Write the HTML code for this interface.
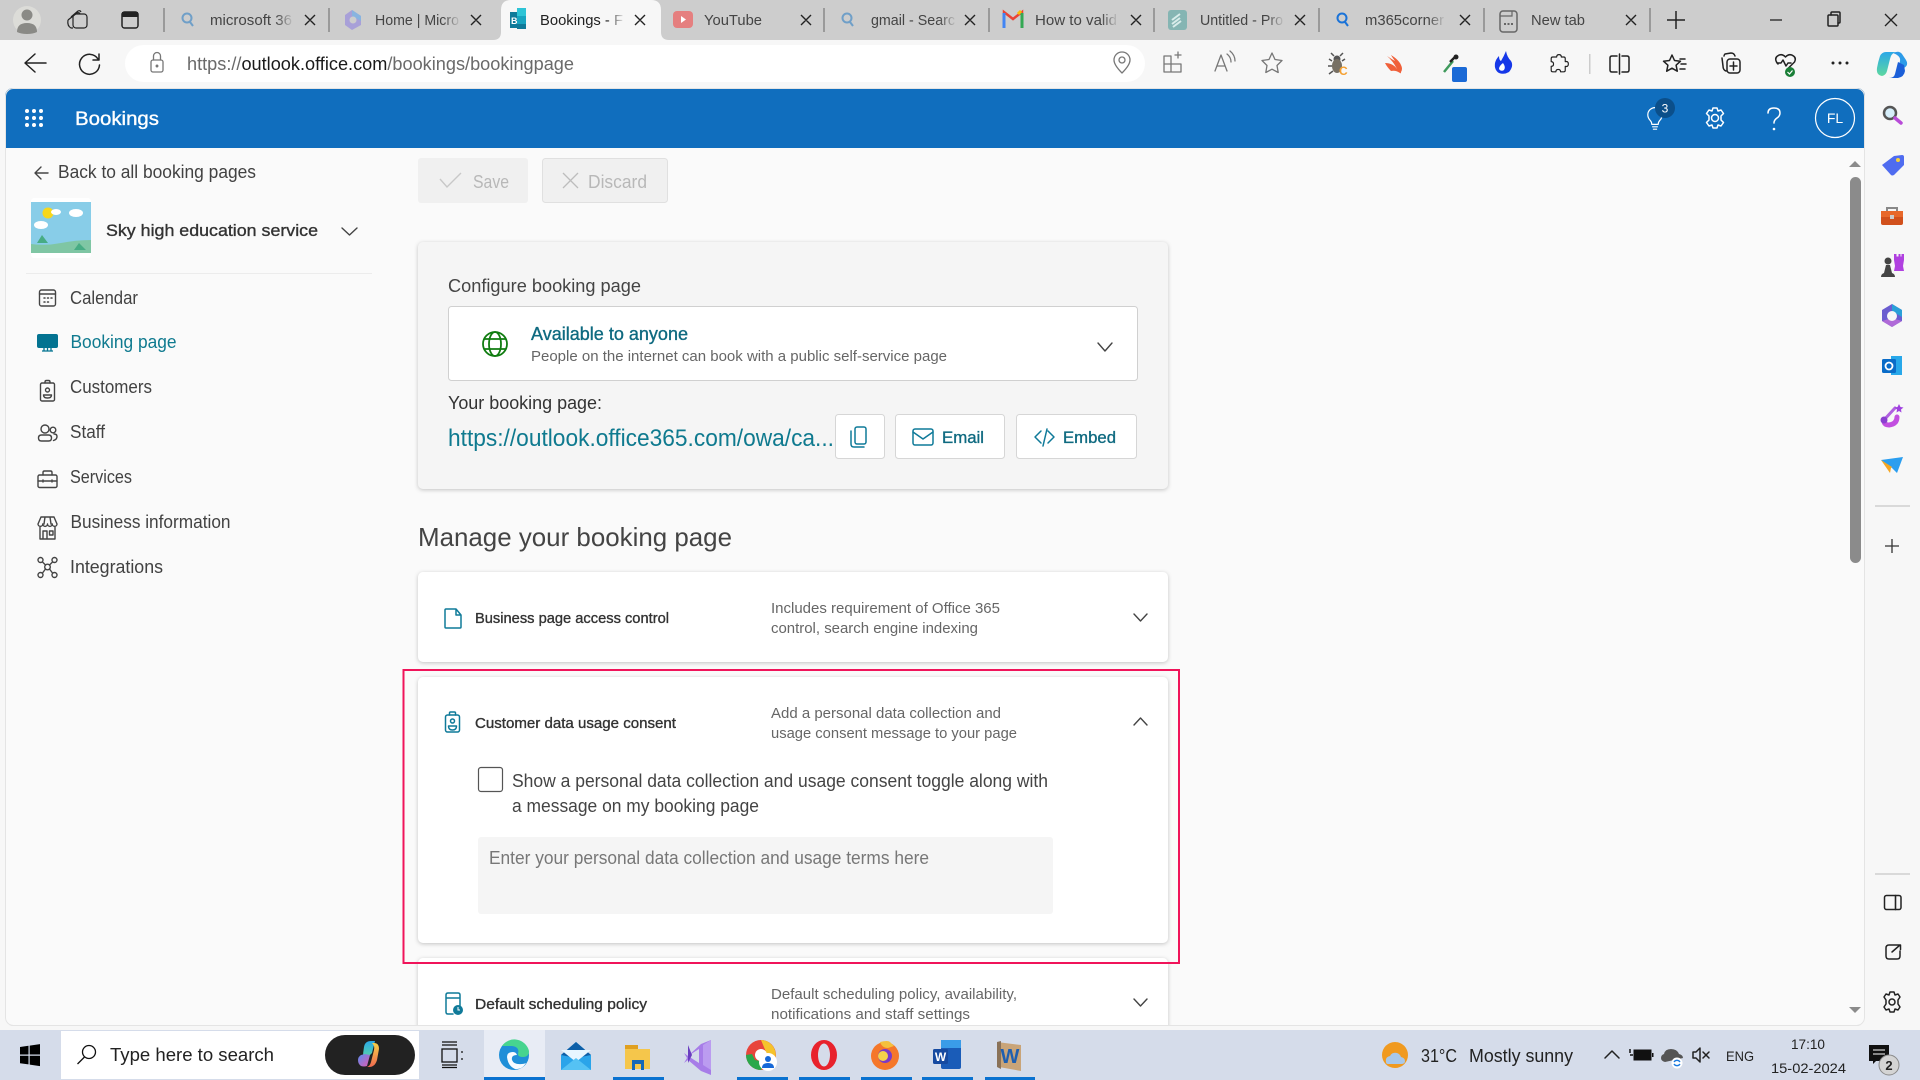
<!DOCTYPE html>
<html><head><meta charset="utf-8"><title>Bookings</title>
<style>
html,body{margin:0;padding:0;width:1920px;height:1080px;overflow:hidden;background:#f7f7f7}
svg{display:block;filter:blur(.35px)}
text{font-family:"Liberation Sans",sans-serif}
.tab{font-size:15px;fill:#444}
.x{stroke:#222;stroke-width:1.4;fill:none}
.s{fill:none;stroke:#444;stroke-width:1.4;stroke-linecap:round;stroke-linejoin:round}
.g{fill:none;stroke:#777;stroke-width:1.3;stroke-linecap:round;stroke-linejoin:round}
.d{fill:none;stroke:#222;stroke-width:1.5;stroke-linecap:round;stroke-linejoin:round}
.w{fill:none;stroke:#fff;stroke-width:1.5;stroke-linecap:round;stroke-linejoin:round}
.t{fill:none;stroke:#0f7a99;stroke-width:1.5;stroke-linecap:round;stroke-linejoin:round}
.nav{font-size:18px;fill:#424242}
.sb{fill:currentColor;stroke:currentColor;stroke-width:.35}
.ttl{font-size:15px;color:#333}
.desc{font-size:15px;fill:#666}
.card{filter:drop-shadow(0 1px 2px rgba(0,0,0,.22))}
</style></head><body>
<svg width="1920" height="1080" viewBox="0 0 1920 1080" xmlns="http://www.w3.org/2000/svg">
<defs><clipPath id="app"><rect x="5" y="88" width="1860" height="938" rx="8"/></clipPath>
<linearGradient id="fg"><stop offset="0" stop-color="#cdcdcd" stop-opacity="0"/><stop offset="1" stop-color="#cdcdcd"/></linearGradient>
<linearGradient id="fa"><stop offset="0" stop-color="#f7f7f7" stop-opacity="0"/><stop offset="1" stop-color="#f7f7f7"/></linearGradient>
<linearGradient id="cp1" x1="0" y1="0" x2="0" y2="1"><stop offset="0" stop-color="#2aa8e8"/><stop offset="1" stop-color="#5ed8a0"/></linearGradient>
<linearGradient id="cp2" x1="0" y1="0" x2="0" y2="1"><stop offset="0" stop-color="#f7d048"/><stop offset="1" stop-color="#f06a50"/></linearGradient>
<linearGradient id="cp3" x1="0" y1="0" x2="1" y2="1"><stop offset="0" stop-color="#5a8cf0"/><stop offset="1" stop-color="#e05ab0"/></linearGradient>
</defs>
<rect width="1920" height="1080" fill="#f7f7f7"/>
<!-- tab strip -->
<rect width="1920" height="40" fill="#cdcdcd"/>
<path d="M493 40q8 0 8-8V10q0-10 10-10h140q10 0 10 10v22q0 8 8 8z" fill="#f7f7f7"/>
<g stroke="#666" stroke-width="1"><path d="M164 8v24M329 8v24M824 8v24M989 8v24M1154 8v24M1319 8v24M1484 8v24M1650 8v24"/></g>
<!-- profile -->
<circle cx="27" cy="20" r="14" fill="#dcdcd8"/><circle cx="27" cy="15" r="5.5" fill="#8a8a86"/><path d="M17 32q0-9 10-9t10 9q-4 2-10 2t-10-2z" fill="#8a8a86"/>
<g fill="none" stroke="#222" stroke-width="1.2" stroke-linejoin="round"><path d="M71 17l7-6q2-1 3 1M68 20l9-7q2-1 3 1"/><rect x="73" y="14" width="14" height="14" rx="3"/><path d="M68 20q-1 6 3 8h2"/></g>
<rect x="122" y="12" width="16" height="16" rx="2.5" class="d"/><rect x="122" y="12" width="16" height="5" fill="#222"/>
<!-- tab icons -->
<g fill="none" stroke="#6f9fc8" stroke-width="2"><circle cx="187" cy="18" r="4.5"/><path d="M190 22l3 4"/><circle cx="847" cy="18" r="4.5"/><path d="M850 22l3 4"/></g>
<g fill="none" stroke="#1a73d8" stroke-width="2"><circle cx="1342" cy="18" r="4.5"/><path d="M1345 22l3 4"/></g>
<path d="M345 15l7-5 9 6v9l-9 5-7-5z" fill="#a8a0d8"/><path d="M352 10l9 6v5l-9-5z" fill="#88b4e0"/><circle cx="353" cy="20" r="3.500" fill="#cdcdcd"/>
<rect x="510" y="12" width="8" height="16" fill="#0f7a99"/><rect x="517" y="8" width="9" height="8" fill="#2ec4d6"/><rect x="517" y="16" width="9" height="8" fill="#18a4c0"/><rect x="517" y="24" width="9" height="5" fill="#0f7a99"/><text x="511" y="24" font-size="9" fill="#fff" font-weight="bold">B</text>
<rect x="673" y="11" width="20" height="17" rx="4" fill="#e57f7f"/><path d="M681 16l5 3.5-5 3.500z" fill="#fff"/>
<path d="M1004 28V12l9 7 9-7v16" fill="none" stroke="#ea4335" stroke-width="2.5"/><path d="M1004 13v15" stroke="#4285f4" stroke-width="3"/><path d="M1022 13v15" stroke="#34a853" stroke-width="3"/><path d="M1021 11l-3 3" stroke="#fbbc04" stroke-width="3"/>
<rect x="1168" y="10" width="19" height="20" rx="3" fill="#85b5b3"/><path d="M1172 20l8-6M1172 24l8-6M1173 27l8-6" stroke="#d8ecea" stroke-width="2"/>
<rect x="1500" y="11" width="17" height="21" rx="3" fill="none" stroke="#666" stroke-width="1.5"/><path d="M1500 16h12v-5" fill="none" stroke="#666" stroke-width="1.2"/><path d="M1504 24h9" stroke="#666" stroke-width="2" stroke-dasharray="2 1.500"/>
<!-- tab text -->
<text class="tab" x="210" y="25" textLength="82" lengthAdjust="spacingAndGlyphs">microsoft 36</text>
<text class="tab" x="375" y="25" textLength="84" lengthAdjust="spacingAndGlyphs">Home | Micro</text>
<text class="tab" x="540" y="25" textLength="83" lengthAdjust="spacingAndGlyphs" style="fill:#222">Bookings - F</text>
<text class="tab" x="704" y="25" textLength="58" lengthAdjust="spacingAndGlyphs">YouTube</text>
<text class="tab" x="871" y="25" textLength="84" lengthAdjust="spacingAndGlyphs">gmail - Searc</text>
<text class="tab" x="1035" y="25" textLength="82" lengthAdjust="spacingAndGlyphs">How to valid</text>
<text class="tab" x="1200" y="25" textLength="83" lengthAdjust="spacingAndGlyphs">Untitled - Pro</text>
<text class="tab" x="1365" y="25" textLength="79" lengthAdjust="spacingAndGlyphs">m365corner</text>
<text class="tab" x="1531" y="25" textLength="54" lengthAdjust="spacingAndGlyphs">New tab</text>
<g fill="url(#fg)"><rect x="276" y="8" width="18" height="24"/><rect x="443" y="8" width="18" height="24"/><rect x="939" y="8" width="18" height="24"/><rect x="1101" y="8" width="18" height="24"/><rect x="1267" y="8" width="18" height="24"/><rect x="1428" y="8" width="18" height="24"/></g>
<rect x="607" y="8" width="18" height="24" fill="url(#fa)"/>
<!-- tab closes -->
<g class="x"><path d="M305 15l10 10M315 15l-10 10M471 15l10 10M481 15l-10 10M635 15l10 10M645 15l-10 10M801 15l10 10M811 15l-10 10M965 15l10 10M975 15l-10 10M1131 15l10 10M1141 15l-10 10M1295 15l10 10M1305 15l-10 10M1460 15l10 10M1470 15l-10 10M1626 15l10 10M1636 15l-10 10"/></g>
<path d="M1667 20h18M1676 11v18" stroke="#222" stroke-width="1.5"/>
<path d="M1770 20h12" stroke="#222" stroke-width="1.3"/>
<g class="d" stroke-width="1.2"><rect x="1828" y="15" width="10" height="11" rx="1"/><path d="M1831 15v-2q0-1 1-1h7q1 0 1 1v9q0 1-1 1h-1"/></g>
<path d="M1885 14l12 12M1897 14l-12 12" stroke="#222" stroke-width="1.3"/>
<!-- toolbar -->
<path d="M46 63H26M35 54L25 63l10 9" class="d"/>
<path d="M98 59a10 10 0 1 0 1.500 6M99 54v6h-6" class="d"/>
<rect x="125" y="45" width="1020" height="37" rx="18.500" fill="#fff"/>
<g class="g"><rect x="151" y="60" width="12" height="12" rx="2"/><path d="M153.500 60v-4a3.500 3.500 0 0 1 7 0v4"/><circle cx="157" cy="66" r=".8" fill="#555"/></g>
<text x="187" y="70" font-size="18" textLength="387" lengthAdjust="spacingAndGlyphs" fill="#6a6a6a">https://<tspan fill="#1a1a1a">outlook.office.com</tspan>/bookings/bookingpage</text>
<!-- address icons -->
<g class="g"><path d="M1122 73q-8-8-8-13a8 8 0 0 1 16 0q0 5-8 13z"/><circle cx="1122" cy="60" r="3"/>
<path d="M1171 56h-7v16h17v-8h-10zM1171 64h-7M1171 64v8M1171 64v-8M1175 55h6M1178 52v6"/>
<path d="M1215 71l6-16 6 16M1217 66h8M1227 54q4 3 4 8M1230 51q5 4 5 10"/>
<path d="M1272 53l3 6.500 7 1-5 5 1.200 7-6.200-3.300-6.200 3.300 1.200-7-5-5 7-1z"/></g>
<!-- extensions -->
<g><circle cx="1337" cy="59" r="3.500" fill="#555"/><ellipse cx="1337" cy="66" rx="5" ry="7" fill="#777064"/><path d="M1334 56l-3-3M1340 56l3-3M1332 61l-3-2M1342 61l3-2M1332 66h-4M1333 71l-4 3" stroke="#555" stroke-width="1.500" fill="none"/><text x="1339" y="75" font-size="12" font-weight="bold" fill="#f5a030">C</text></g>
<path d="M1385 63q8 0 12 6-4-8-10-13 6 4 8 5-3-4-4-6 8 5 10 10 2 4 0 7 0 2-1 1-4-3-9-2-4-4-6-8z" fill="#f0603a"/>
<path d="M1444 72l9-11" stroke="#3f9a5c" stroke-width="2.500"/><path d="M1450 62l5-5" stroke="#222" stroke-width="2.500"/><circle cx="1456" cy="57" r="2.500" fill="#222"/><rect x="1452" y="67" width="15" height="15" rx="2" fill="#1b6ad6"/>
<path d="M1506 51q1 6 5 10 3 5-2 11-5 3-10 1-5-3-4-10 1-4 4-7 0 4 2 5 3-5 5-10z" fill="#1638e8"/><path d="M1503 63q3 4 1 7-3 2-5-1 0-3 4-6z" fill="#fff"/>
<path class="d" transform="translate(1559 64) scale(.78) translate(-1559 -63)" d="M1556 54q0-3 3-3t3 3h3q2 0 2 2v4q4-1 4 3t-4 3v5q0 2-2 2h-4q0-3-3-3t-3 3h-4q-2 0-2-2v-5q3 0 3-3t-3-3v-4q0-2 2-2z" stroke-width="1.700"/>
<rect x="1589" y="54" width="1.500" height="20" fill="#ccc"/>
<g class="d" stroke-width="1.300"><path d="M1617 56h-5q-2 0-2 2v12q0 2 2 2h5M1622 56h5q2 0 2 2v12q0 2-2 2h-5M1619.500 54v20"/>
<path d="M1672 55l2.500 5.500 6 .7-4.400 4 1.200 6-5.300-3-5.300 3 1.200-6-4.400-4 6-.7zM1680 59h5M1681 64h5M1680 69h5"/>
<path d="M1724 56q0-1 1-2l6-1q3 0 4 3M1722 58l1 8q0 4 3 5"/><rect x="1727" y="59" width="13" height="14" rx="3"/><path d="M1733.500 62v8M1730 66h7"/>
<path d="M1778 64l-1.500-2q-2-4 1-6 4-3 8 1 4-4 8-1 3 2 1 6l-6 6M1777 63h4l2-3 3 6 2-3h3"/></g>
<circle cx="1790" cy="72" r="5" fill="#1a7f37"/><path d="M1787.500 72l2 2 3-3.500" stroke="#fff" stroke-width="1.200" fill="none"/>
<g fill="#222"><circle cx="1833" cy="63" r="1.500"/><circle cx="1840" cy="63" r="1.500"/><circle cx="1847" cy="63" r="1.500"/></g>
<path d="M1893 53q6-3 9 1l4 6q3 5-2 8l-6 2 2-9q1-5-7-8z" fill="#2d9be8"/><path d="M1898 62l-3 12q-1 4-6 4h9q6-1 7-7l-1-6z" fill="#1b5fd8"/><path d="M1886 52h9q-4 2-5 7l-3 12q-1 4-5 5-6-1-5-8 1-6 3-12 2-4 6-4z" fill="url(#cp1)"/>
<!-- app -->
<g clip-path="url(#app)">
<rect x="5" y="88" width="1860" height="938" fill="#fafafa"/>
<rect x="5" y="88" width="1860" height="60" fill="#106ebe"/>
<!-- main -->
<rect x="418" y="158" width="110" height="45" rx="3" fill="#f0f0f0"/>
<rect x="542.500" y="158.500" width="125" height="44" rx="3" fill="#f0f0f0" stroke="#e0e0e0"/>
<path d="M461 173l-14 14-7-8" fill="none" stroke="#c8c8c8" stroke-width="1.400"/>
<path d="M563 173l15 15M578 173l-15 15" stroke="#bdbdbd" stroke-width="1.300"/>
<text x="473" y="188" font-size="18" fill="#b8b8b8" textLength="36" lengthAdjust="spacingAndGlyphs">Save</text>
<text x="588" y="188" font-size="18" fill="#b8b8b8" textLength="59" lengthAdjust="spacingAndGlyphs">Discard</text>
<rect class="card" x="418" y="242" width="750" height="247" rx="5" fill="#f5f5f5"/>
<text x="448" y="292" font-size="18" fill="#444" textLength="193" lengthAdjust="spacingAndGlyphs">Configure booking page</text>
<rect x="448.500" y="306.500" width="689" height="74" rx="3" fill="#fff" stroke="#d0d0d0"/>
<g fill="none" stroke="#107c10" stroke-width="1.800"><circle cx="495" cy="344" r="12"/><ellipse cx="495" cy="344" rx="6" ry="12"/><path d="M484 339h22M484 349h22"/></g>
<text class="sb" style="color:#0f6a80" x="531" y="340" font-size="18" textLength="157" lengthAdjust="spacingAndGlyphs">Available to anyone</text>
<text x="531" y="361" font-size="15" fill="#666" textLength="416" lengthAdjust="spacingAndGlyphs">People on the internet can book with a public self-service page</text>
<path d="M1098 343l7 8 7-8" class="s"/>
<text x="448" y="409" font-size="18" fill="#333" textLength="154" lengthAdjust="spacingAndGlyphs">Your booking page:</text>
<text x="448" y="446" font-size="24" fill="#0f7a8f" textLength="386" lengthAdjust="spacingAndGlyphs">https://outlook.office365.com/owa/ca...</text>
<rect x="835.500" y="414.500" width="49" height="44" rx="3" fill="#fff" stroke="#d6d6d6"/>
<rect x="895.500" y="414.500" width="109" height="44" rx="3" fill="#fff" stroke="#d6d6d6"/>
<rect x="1016.500" y="414.500" width="120" height="44" rx="3" fill="#fff" stroke="#d6d6d6"/>
<g class="t"><rect x="855" y="427" width="11" height="17" rx="2"/><path d="M851 431v13q0 3 3 3h10"/>
<rect x="913" y="429" width="20" height="16" rx="2"/><path d="M913 432l10 7 10-7"/>
<path d="M1041 431l-6 6 6 6M1048 431l6 6-6 6M1047 429l-4 17"/></g>
<text class="sb" style="color:#0f6a80" x="942" y="443" font-size="17" textLength="42" lengthAdjust="spacingAndGlyphs">Email</text>
<text class="sb" style="color:#0f6a80" x="1063" y="443" font-size="17" textLength="53" lengthAdjust="spacingAndGlyphs">Embed</text>
<text x="418" y="546" font-size="26" fill="#444" textLength="314" lengthAdjust="spacingAndGlyphs">Manage your booking page</text>
<!-- card 1 -->
<rect class="card" x="418" y="572" width="750" height="90" rx="5" fill="#fff"/>
<path class="t" d="M445 610q0-1 1-1h10l5 6v12q0 1-1 1h-14q-1 0-1-1zM456 609v6h5"/>
<text class="ttl sb" x="475" y="623" textLength="194" lengthAdjust="spacingAndGlyphs">Business page access control</text>
<text class="desc" x="771" y="613" textLength="229" lengthAdjust="spacingAndGlyphs">Includes requirement of Office 365</text>
<text class="desc" x="771" y="633" textLength="207" lengthAdjust="spacingAndGlyphs">control, search engine indexing</text>
<path d="M1134 614l6.500 7 6.500-7" class="s"/>
<!-- card 2 -->
<rect class="card" x="418" y="677" width="750" height="266" rx="5" fill="#fff"/>
<g class="t"><rect x="445.500" y="715" width="14" height="17" rx="2"/><path d="M449.500 715v-2q0-1 1-1h4q1 0 1 1v2"/><circle cx="452.500" cy="721" r="2"/><path d="M448.500 726h8q0 4-4 4t-4-4z"/></g>
<text class="ttl sb" x="475" y="728" textLength="201" lengthAdjust="spacingAndGlyphs">Customer data usage consent</text>
<text class="desc" x="771" y="718" textLength="230" lengthAdjust="spacingAndGlyphs">Add a personal data collection and</text>
<text class="desc" x="771" y="738" textLength="246" lengthAdjust="spacingAndGlyphs">usage consent message to your page</text>
<path d="M1134 725l6.500-7 6.500 7" class="s"/>
<rect x="478.500" y="767.500" width="24" height="24" rx="2.500" fill="#fff" stroke="#555" stroke-width="1.200"/>
<text x="512" y="787" font-size="18" fill="#444" textLength="536" lengthAdjust="spacingAndGlyphs">Show a personal data collection and usage consent toggle along with</text>
<text x="512" y="812" font-size="18" fill="#444" textLength="247" lengthAdjust="spacingAndGlyphs">a message on my booking page</text>
<rect x="478" y="837" width="575" height="77" rx="3" fill="#f5f5f5"/>
<text x="489" y="864" font-size="18" fill="#777" textLength="440" lengthAdjust="spacingAndGlyphs">Enter your personal data collection and usage terms here</text>
<!-- card 3 -->
<rect class="card" x="418" y="958" width="750" height="110" rx="5" fill="#fff"/>
<g class="t"><path d="M460 1008v-13q0-2-2-2h-10q-2 0-2 2v17q0 2 2 2h5M446 998h14"/></g><circle cx="458" cy="1010" r="5" fill="#0f7a99"/><path d="M458 1007v3h2" stroke="#fff" fill="none"/>
<text class="ttl sb" x="475" y="1009" textLength="172" lengthAdjust="spacingAndGlyphs">Default scheduling policy</text>
<text class="desc" x="771" y="999" textLength="246" lengthAdjust="spacingAndGlyphs">Default scheduling policy, availability,</text>
<text class="desc" x="771" y="1019" textLength="199" lengthAdjust="spacingAndGlyphs">notifications and staff settings</text>
<path d="M1134 999l6.500 7 6.500-7" class="s"/>
<!-- red frame -->
<rect x="403.500" y="670" width="775.500" height="293" fill="none" stroke="#f0145a" stroke-width="2"/>
<!-- scrollbar -->
<path d="M1849 167l6-6 6 6z" fill="#8b8b8b"/>
<rect x="1850" y="177" width="11" height="386" rx="5.500" fill="#8b8b8b"/>
<path d="M1849 1007l6 6 6-6z" fill="#8b8b8b"/>
<rect x="5" y="1025" width="1860" height="1" fill="#e0e0e0"/>
</g>
<rect x="5.500" y="88.500" width="1859" height="937" rx="8" fill="none" stroke="#e4e4e4"/>
<!-- header contents -->
<g fill="#fff"><circle cx="27" cy="111" r="2"/><circle cx="34" cy="111" r="2"/><circle cx="41" cy="111" r="2"/><circle cx="27" cy="118" r="2"/><circle cx="34" cy="118" r="2"/><circle cx="41" cy="118" r="2"/><circle cx="27" cy="125" r="2"/><circle cx="34" cy="125" r="2"/><circle cx="41" cy="125" r="2"/></g>
<text class="sb" style="color:#fff" x="75" y="125" font-size="19" textLength="84" lengthAdjust="spacingAndGlyphs">Bookings</text>
<path class="w" transform="translate(1655 118) scale(.8) translate(-1655 -118)" d="M1651 126q0-3-2-5-3-3-3-7a9 9 0 0 1 18 0q0 4-3 7-2 2-2 5zM1652 129h6M1653 132h4"/>
<circle cx="1665" cy="108" r="10" fill="#0b4f8a"/><text x="1665" y="112.500" font-size="12" fill="#fff" text-anchor="middle">3</text>
<g class="w"><circle cx="1715" cy="118" r="3.500"/><path d="M1713 108h4l1 3 3-1 2.500 3.500-2.500 2.500v4l2.500 2.500-2.500 3.500-3-1-1 3h-4l-1-3-3 1-2.500-3.500 2.500-2.500v-4l-2.500-2.500 2.500-3.500 3 1z"/>
<path d="M1768 113q0-5 6-5t6 5q0 3-3 5-3 2-3 5"/></g><circle cx="1774" cy="129" r="1.300" fill="#fff"/>
<circle cx="1835" cy="118" r="19.500" fill="none" stroke="#fff" stroke-width="1.200"/>
<text x="1835" y="123" font-size="14" fill="#fff" text-anchor="middle">FL</text>
<!-- sidebar -->
<path d="M48 173H36M41 167l-6 6 6 6" class="s"/>
<text x="58" y="178" font-size="18" fill="#424242" textLength="198" lengthAdjust="spacingAndGlyphs">Back to all booking pages</text>
<rect x="31" y="198" width="60" height="60" rx="3" fill="#fff"/>
<rect x="31" y="202" width="60" height="51" fill="#88cde8"/>
<path d="M31 244q15 2 30-1t30-3v13H31z" fill="#7fc6a4"/>
<circle cx="48" cy="213" r="5.500" fill="#f7d71c"/>
<g fill="#fff"><ellipse cx="56" cy="212" rx="5" ry="3"/><ellipse cx="76" cy="213" rx="7" ry="4"/><ellipse cx="41" cy="225" rx="7" ry="4"/></g>
<path d="M37 243l5-8 6 8zM74 250l5-7 7 7z" fill="#47ac84"/>
<text class="sb" style="color:#333" x="106" y="236" font-size="17" textLength="212" lengthAdjust="spacingAndGlyphs">Sky high education service</text>
<path d="M342 228l7.500 7 7.500-7" class="s"/>
<rect x="26" y="273" width="346" height="1" fill="#ececec"/>
<g class="s">
<rect x="39.500" y="290" width="16" height="16" rx="2"/><path d="M39.500 294h16"/><path d="M44 298h1M47.500 298h1M51 298h1M44 302h1M47.500 302h1" stroke-width="1.500"/>
<rect x="40.500" y="383" width="14" height="18" rx="1.500"/><path d="M45 383v-1q0-1.500 1.500-1.500h2q1.500 0 1.500 1.500v1"/><circle cx="47.500" cy="390" r="2"/><path d="M43.500 395h8q0 3-4 3t-4-3z"/>
<circle cx="45" cy="429" r="4"/><circle cx="53" cy="430" r="2.800"/><path d="M38.500 438q0-3 3-3h7q3 0 3 3 0 3-3 3h-7q-3 0-3-3zM54 434q3 0 3 2.500 0 3-3.500 4"/>
<rect x="38" y="475" width="19" height="12.500" rx="1.500"/><path d="M43 475v-2.500q0-1.500 1.500-1.500h6q1.500 0 1.500 1.500v2.500M38 481h19M43 480v2M52 480v2"/>
<path d="M38 524l3-7h13l3 7a2.375 2.375 0 0 1-4.750 0a2.375 2.375 0 0 1-4.750 0a2.375 2.375 0 0 1-4.750 0a2.375 2.375 0 0 1-4.750 0zM40 527v12h15v-12M43 539v-8h4v8M49.500 531h3.500v4h-3.500zM45 517l-1 7M50 517l1 7"/>
<circle cx="47.500" cy="567" r="2.800"/><circle cx="40.500" cy="560" r="2.500"/><circle cx="54.500" cy="560" r="2.500"/><circle cx="40.500" cy="575" r="2.500"/><circle cx="54.500" cy="575" r="2.500"/><path d="M42.500 562l3 3M52.500 562l-3 3M42.500 573l3-4M52.500 573l-3-4"/>
</g>
<rect x="37" y="334" width="21" height="14" rx="2" fill="#037391"/><path d="M42 351h11M47.500 348v3M44 348v3M51 348v3" stroke="#037391" stroke-width="1.300"/>
<text class="nav" x="70" y="304" textLength="68" lengthAdjust="spacingAndGlyphs">Calendar</text>
<text class="nav" x="70.500" y="348" textLength="106" lengthAdjust="spacingAndGlyphs" style="fill:#0f7a8f">Booking page</text>
<text class="nav" x="70" y="393" textLength="82" lengthAdjust="spacingAndGlyphs">Customers</text>
<text class="nav" x="70" y="438" textLength="35" lengthAdjust="spacingAndGlyphs">Staff</text>
<text class="nav" x="70" y="483" textLength="62" lengthAdjust="spacingAndGlyphs">Services</text>
<text class="nav" x="70.500" y="528" textLength="160" lengthAdjust="spacingAndGlyphs">Business information</text>
<text class="nav" x="70" y="573" textLength="93" lengthAdjust="spacingAndGlyphs">Integrations</text>
<!-- right sidebar -->
<circle cx="1890" cy="113" r="6" fill="#d6eefa" stroke="#555" stroke-width="2.500"/><path d="M1895 118l6 5" stroke="#b84bd8" stroke-width="3.500" stroke-linecap="round"/>
<path d="M1882 165l12-9 8-1q2 0 2 2v8l-10 10q-2 1-3 0z" fill="#4f6cf0"/><circle cx="1898" cy="160" r="2" fill="#f4d03f"/>
<rect x="1881" y="211" width="22" height="14" rx="2" fill="#d1501c"/><rect x="1881" y="211" width="22" height="6" fill="#e8682a"/><path d="M1887 211v-3h10v3" fill="none" stroke="#888" stroke-width="2"/><rect x="1890" y="215" width="4" height="4" fill="#ccc"/>
<circle cx="1888" cy="261" r="3.500" fill="#444"/><path d="M1881 277q0-3 3-4l2-8h4l2 8q3 1 3 4z" fill="#444"/>
<path d="M1894 254h2.500v2.500h2v-2.500h2v2.500h1v-2.500h2.500v6l-1 6 1 5h-10l1-5-1-6z" fill="#b040e0"/>
<path d="M1892 304l10 6v11l-10 6-10-6v-11z" fill="#6a5dd0"/><path d="M1892 304l10 6v7l-10-6z" fill="#2aa0d8"/><path d="M1882 321l10 6 10-6-10-3z" fill="#b06ad8"/><circle cx="1892" cy="316" r="5" fill="#f7f7f7"/>
<rect x="1891" y="356" width="11" height="19" fill="#28a8ea"/><rect x="1882" y="359" width="14" height="14" rx="1.500" fill="#0a6cc8"/><circle cx="1889" cy="366" r="3.500" fill="none" stroke="#fff" stroke-width="1.800"/>
<path d="M1883 421l12-13" stroke="#b060e0" stroke-width="3" stroke-linecap="round"/><path d="M1897 417q0 7-8 8-4 0-5-3" fill="none" stroke="#c24fe0" stroke-width="5" stroke-linecap="round"/><circle cx="1884" cy="420" r="3.500" fill="#8a3fd0"/><path d="M1899 404l1.500 3 3 .5-2.500 2 .5 3-2.500-1.500-2.500 1.500.5-3-2.500-2 3-.5z" fill="#a040e0"/>
<path d="M1881 460l22-3-6 16-5-5z" fill="#2a9ef0"/><path d="M1881 460l11 7 11-10-12 11-1 5z" fill="#f5a623"/>
<rect x="1875" y="505.500" width="35" height="1" fill="#bbb"/>
<path d="M1885 546h14M1892 539v14" stroke="#333" stroke-width="1.300"/>
<rect x="1875" y="873.500" width="35" height="1" fill="#bbb"/>
<g class="d" stroke-width="1.300"><rect x="1884.500" y="895.500" width="16.500" height="14" rx="2"/><path d="M1895.500 895.500v14" stroke-width="1.600"/>
<path d="M1896 945h-7q-3 0-3 3v8q0 3 3 3h8q3 0 3-3v-5M1892 952l8-7M1896 945h4.500v4.500"/>
<circle cx="1892" cy="1002" r="3"/><path d="M1890 992h4l1 3 3-1 2 3-2 3v4l2 3-2 3-3-1-1 3h-4l-1-3-3 1-2-3 2-3v-4l-2-3 2-3 3 1z"/></g>
<!-- taskbar -->
<rect y="1030" width="1920" height="50" fill="#d5dcea"/>
<g fill="#000"><path d="M20 1047l8.500-1.200v8.700H20zM29.700 1045.600l10.300-1.500v10.400H29.700zM20 1055.700h8.500v8.700L20 1063.200zM29.700 1055.700H40v10.400l-10.300-1.500z"/></g>
<rect x="61" y="1031" width="358" height="48" fill="#fff"/>
<circle cx="89" cy="1052" r="6.500" fill="none" stroke="#111" stroke-width="1.300"/><path d="M84.500 1057l-7 7" stroke="#111" stroke-width="1.300"/>
<text x="110" y="1061" font-size="18" fill="#222" textLength="164" lengthAdjust="spacingAndGlyphs">Type here to search</text>
<rect x="325" y="1035" width="90" height="40" rx="20" fill="#222"/>
<path d="M364 1047q1-6 7-6h4l-3 12-6 6-3-1q0-6 1-11z" fill="url(#cp1)"/><path d="M372 1043h2q5 0 5 6l-2 11q-2 7-8 7h-2q3-1 4-5l3-12q1-4-2-7z" fill="url(#cp2)"/><path d="M358 1060q0-3 3-5l4-1 5 1-3 11q-3 1-6 0-3-2-3-6z" fill="url(#cp3)"/>
<g fill="none" stroke="#111" stroke-width="1.300"><rect x="442" y="1049" width="15" height="13"/><path d="M442 1045h15M442 1065h15M442 1042h15M442 1067.500h15M461 1052h2M461 1059h2"/></g>
<rect x="484" y="1030" width="61" height="50" fill="#e8ecf5"/>
<!-- bars -->
<g fill="#0a72d0"><rect x="484" y="1077" width="61" height="3"/><rect x="613" y="1077" width="51" height="3"/><rect x="737" y="1077" width="51" height="3"/><rect x="799" y="1077" width="51" height="3"/><rect x="861" y="1077" width="51" height="3"/><rect x="922" y="1077" width="51" height="3"/><rect x="985" y="1077" width="50" height="3"/></g>
<!-- taskbar apps -->
<circle cx="514" cy="1055" r="15" fill="#1f8fd8"/><path d="M502 1046a15 15 0 0 1 27 5q0 6-6 6-5 0-5-3 2-7-6-8-7 0-10 0z" fill="#47d48f"/><path d="M507 1057q0-5 6-5 3 0 4 3-6 0-5 5 2 5 10 4 2 0 4-1-4 7-11 6-7-3-8-12z" fill="#f7fbff"/>
<path d="M576 1042l15 13v15h-30v-15z" fill="#2aa4ea"/><path d="M561 1055l15-13 15 13-15 3z" fill="#0e5fa8"/><path d="M561 1050h30l-15 12z" fill="#e8f6ff"/><path d="M561 1070l15-12 15 12z" fill="#55c2f4"/>
<path d="M625 1045h10l3 4h12v20h-25z" fill="#f5c64b"/><rect x="625" y="1045" width="13" height="4" fill="#e0a020"/><path d="M632 1070v-10h12v10h-3v-6h-6v6z" fill="#1668b8"/>
<path d="M711 1040l-10 4-13 12-4-3 3 5-3 5 4-3 13 11 10 4z" fill="#a77de8"/><path d="M688 1056l11 7v-14z" fill="#d5dcea"/><path d="M711 1040v30l-8-5V1045z" fill="#bb9cf0"/><path d="M688 1045l4 10-4 8z" fill="#6a3ec0"/>
<circle cx="761" cy="1055" r="15" fill="#e8453c"/><path d="M746 1055a15 15 0 0 0 15 15l4-8-10-2-3-6z" fill="#2aa84a"/><path d="M761 1040a15 15 0 0 1 13 22l-8-10z" fill="#f5c32c"/><circle cx="761" cy="1055" r="6" fill="#fff"/><circle cx="768" cy="1062" r="9" fill="#fff"/><circle cx="768" cy="1059" r="3" fill="#1668d8"/><path d="M762 1068q0-5 6-5t6 5z" fill="#1668d8"/>
<ellipse cx="824" cy="1055" rx="13" ry="15" fill="#e8222c"/><ellipse cx="824" cy="1055" rx="6" ry="11.500" fill="#d5dcea"/>
<circle cx="885" cy="1056" r="14" fill="#f5772a"/><circle cx="885" cy="1056" r="7" fill="#7a3ac8"/><path d="M880 1042q8-2 10 0l4 4-6 2q-6 0-8-6z" fill="#f5c03c"/><circle cx="883" cy="1056" r="5" fill="#f5d24a"/>
<rect x="941" y="1040" width="20" height="29" rx="2" fill="#1a5cb8"/><rect x="941" y="1040" width="20" height="8" fill="#3a9ce8"/><rect x="933" y="1049" width="15" height="15" rx="1.500" fill="#164aa0"/><text x="940.500" y="1061" font-size="12" font-weight="bold" fill="#fff" text-anchor="middle">W</text>
<path d="M997 1042l24 3v26l-22-4z" fill="#c9a478"/><path d="M997 1042l4-1v28l-4-2z" fill="#8a7258"/><text x="1010" y="1063" font-size="20" font-weight="bold" fill="#1f5fb0" text-anchor="middle">W</text>
<!-- tray -->
<circle cx="1395" cy="1055" r="13" fill="#f09a20"/><path d="M1386 1062q-1-5 4-6 2-4 7-3 3 1 4 4 4 1 4 4 0 3-4 3h-13q-2 0-2-2z" fill="#a8c8ea"/>
<text x="1421" y="1062" font-size="18" fill="#222" textLength="36" lengthAdjust="spacingAndGlyphs">31°C</text>
<text x="1469" y="1062" font-size="18" fill="#222" textLength="104" lengthAdjust="spacingAndGlyphs">Mostly sunny</text>
<path d="M1605 1058l7-7 7 7" class="d" stroke-width="1.300"/>
<rect x="1634" y="1050" width="17" height="10" fill="#111" stroke="#111"/><path d="M1633 1055h-3M1630 1049v4" stroke="#111" stroke-width="1.500"/><rect x="1652" y="1053" width="1.500" height="4" fill="#111"/>
<path d="M1665 1062q-4-1-4-4 0-3 3-4 1-5 7-5t8 5q4 1 4 4" fill="#555"/><circle cx="1677" cy="1063" r="5.500" fill="#fff"/><path d="M1674 1062a3.500 3.500 0 0 1 6 0M1680 1064a3.500 3.500 0 0 1-6 0" stroke="#1a7ae0" stroke-width="1.300" fill="none"/>
<path d="M1693 1052h3l4-4v14l-4-4h-3zM1703 1052l6 6M1709 1052l-6 6" class="d" stroke-width="1"/>
<text x="1726" y="1061" font-size="14" fill="#222" textLength="28" lengthAdjust="spacingAndGlyphs">ENG</text>
<text x="1791" y="1049" font-size="14" fill="#222" textLength="34" lengthAdjust="spacingAndGlyphs">17:10</text>
<text x="1771" y="1073" font-size="14" fill="#222" textLength="75" lengthAdjust="spacingAndGlyphs">15-02-2024</text>
<path d="M1869 1045h20v16h-13l-3 3v-3h-4z" fill="#111"/><path d="M1873 1050h12M1873 1054h12" stroke="#fff" stroke-width="1"/>
<circle cx="1889" cy="1065" r="10" fill="#d4d4d4" stroke="#8a8a8a"/><text x="1889" y="1070" font-size="13" font-weight="bold" fill="#222" text-anchor="middle">2</text>
</svg>
</body></html>
